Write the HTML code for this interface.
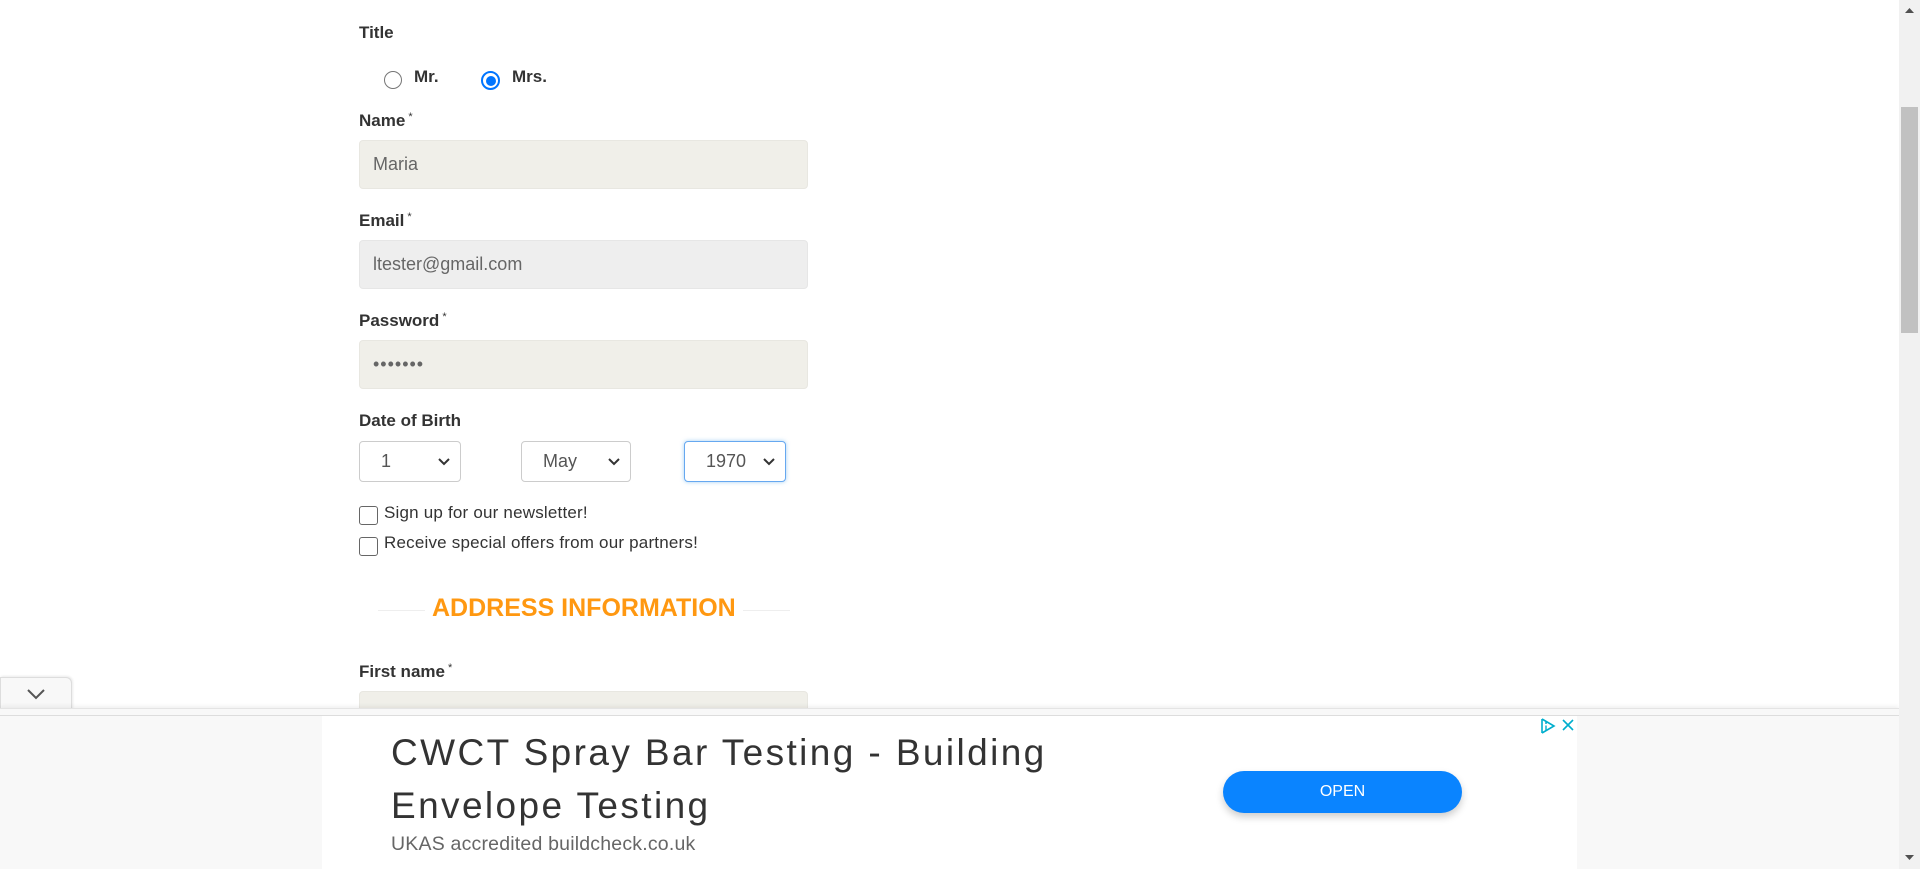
<!DOCTYPE html>
<html><head><meta charset="utf-8"><style>
*{box-sizing:border-box;margin:0;padding:0}
html,body{width:1920px;height:869px;overflow:hidden;background:#fff;font-family:"Liberation Sans",Arial,sans-serif;color:#333}
.a{position:absolute}
.lbl{position:absolute;left:359px;font-weight:bold;font-size:17px;color:#333;line-height:20px}
.lbl sup{font-weight:normal;font-size:11px;position:relative;top:-4px;margin-left:3px;vertical-align:top}
.inp{position:absolute;left:359px;width:449px;height:49px;border-radius:4px;background:#f0efe9;border:1px solid #e8e7e1;font-size:18px;color:#666;padding-left:13px;line-height:47px}
.sel{position:absolute;top:441px;height:41px;border:1px solid #ccc;border-radius:4px;background:#fff;font-size:18px;color:#555;line-height:39px}
.sel svg{position:absolute;right:9px;top:15px}
.cb{position:absolute;left:359px;width:19px;height:19px;border:1.5px solid #666;border-radius:3px;background:#fff}
.cbt{position:absolute;left:384px;font-size:17px;color:#333;line-height:20px;letter-spacing:0.2px}
</style></head><body>
<div class="lbl" style="top:23px">Title</div>
<div class="a" style="left:384px;top:71px;width:18px;height:18px;border:1.5px solid #767676;border-radius:50%"></div>
<div class="a lbl" style="left:414px;top:67px">Mr.</div>
<div class="a" style="left:481px;top:71px;width:19px;height:19px;border:2px solid #0075ff;border-radius:50%;background:#fff"><div style="position:absolute;left:2.5px;top:2.5px;width:10px;height:10px;border-radius:50%;background:#0075ff"></div></div>
<div class="a lbl" style="left:512px;top:67px">Mrs.</div>

<div class="lbl" style="top:111px">Name<sup>*</sup></div>
<div class="inp" style="top:140px">Maria</div>
<div class="lbl" style="top:211px">Email<sup>*</sup></div>
<div class="inp" style="top:240px;background:#eeeeee;border-color:#e6e6e6">ltester@gmail.com</div>
<div class="lbl" style="top:311px">Password<sup>*</sup></div>
<div class="inp" style="top:340px;letter-spacing:1px">•••••••</div>

<div class="lbl" style="top:411px">Date of Birth</div>
<div class="sel" style="left:359px;width:102px;padding-left:21px">1<svg width="14" height="10" viewBox="0 0 14 10"><path d="M2 2l5 5 5-5" fill="none" stroke="#333" stroke-width="2"/></svg></div>
<div class="sel" style="left:521px;width:110px;padding-left:21px">May<svg width="14" height="10" viewBox="0 0 14 10"><path d="M2 2l5 5 5-5" fill="none" stroke="#333" stroke-width="2"/></svg></div>
<div class="sel" style="left:684px;width:102px;padding-left:21px;border-color:#66a8f0;box-shadow:0 0 4px rgba(102,175,233,.6)">1970<svg width="14" height="10" viewBox="0 0 14 10"><path d="M2 2l5 5 5-5" fill="none" stroke="#333" stroke-width="2"/></svg></div>

<div class="cb" style="top:506px"></div><div class="cbt" style="top:503px">Sign up for our newsletter!</div>
<div class="cb" style="top:537px"></div><div class="cbt" style="top:533px">Receive special offers from our partners!</div>

<div class="a" style="left:378px;top:610px;width:412px;height:1px;background:#eee"></div>
<div class="a" style="left:425px;top:593px;padding:0 7px;background:#fff;color:#ff9811;font-weight:bold;font-size:25px;line-height:30px">ADDRESS INFORMATION</div>

<div class="lbl" style="top:662px">First name<sup>*</sup></div>
<div class="inp" style="top:691px"></div>

<!-- ad bar -->
<div class="a" style="left:0;top:677px;width:72px;height:34px;background:#f8f8f8;border:1px solid #ddd;border-bottom:none;border-radius:0 6px 0 0;box-shadow:1px -1px 2px rgba(0,0,0,.08)">
<svg class="a" style="left:25px;top:10px" width="20" height="13" viewBox="0 0 20 13"><path d="M2 2l8 8 8-8" fill="none" stroke="#555" stroke-width="2"/></svg></div>
<div class="a" style="left:0;top:708px;width:1899px;height:161px;background:#f8f8f8;border-top:1px solid #e4e4e4;box-shadow:0 -2px 4px rgba(0,0,0,.06)"></div>
<div class="a" style="left:0;top:715px;width:1899px;height:1px;background:#ddd"></div>
<div class="a" style="left:322px;top:716px;width:1255px;height:153px;background:#fff"></div>
<div class="a" style="left:391px;top:726px;font-size:37px;line-height:53px;color:#333;letter-spacing:2.4px">CWCT Spray Bar Testing - Building<br>Envelope Testing</div>
<div class="a" style="left:391px;top:833px;font-size:19.5px;color:#666;letter-spacing:0.2px">UKAS accredited buildcheck.co.uk</div>
<div class="a" style="left:1223px;top:771px;width:239px;height:42px;border-radius:21px;background:#0a84ff;color:#fff;font-size:16px;text-align:center;line-height:42px;box-shadow:0 4px 8px rgba(0,0,0,.2)">OPEN</div>
<svg class="a" style="left:1540px;top:717px" width="36" height="18" viewBox="0 0 36 18"><path d="M2 2v14M2 2l12 7-12 7" fill="none" stroke="#00aecd" stroke-width="1.6"/><circle cx="6" cy="6" r="1" fill="#00aecd"/><path d="M6 8.5v5" stroke="#00aecd" stroke-width="1.4"/><path d="M23 3l10 10M33 3L23 13" stroke="#00aecd" stroke-width="1.6"/></svg>

<!-- scrollbar -->
<div class="a" style="left:1899px;top:0;width:21px;height:869px;background:#f1f1f1"></div>
<div class="a" style="left:1901px;top:107px;width:17px;height:226px;background:#c1c1c1"></div>
<svg class="a" style="left:1904px;top:6px" width="11" height="8" viewBox="0 0 11 8"><path d="M1 7l4.5-5L10 7z" fill="#505050"/></svg>
<svg class="a" style="left:1904px;top:854px" width="11" height="8" viewBox="0 0 11 8"><path d="M1 1l4.5 5L10 1z" fill="#505050"/></svg>
</body></html>
